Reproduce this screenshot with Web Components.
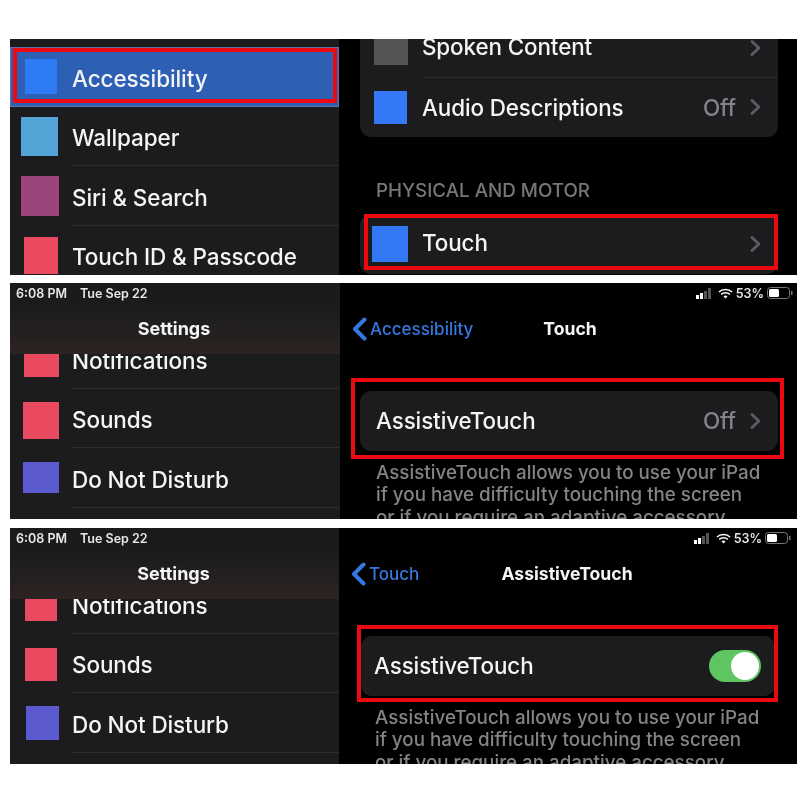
<!DOCTYPE html>
<html>
<head>
<meta charset="utf-8">
<title>AssistiveTouch</title>
<style>
  html, body { margin: 0; background: #fff; }
  body { padding: 39px 10px 0; font-family: Inter, "Liberation Sans", sans-serif; }
  shot-panel + shot-panel { margin-top: 8px; }
  shot-panel:last-of-type { margin-top: 9px; }
</style>
</head>
<body>

<shot-panel side="329">
  <side-list slot="side" pad="8">
    <side-row color="#2d7cf6" x="15" w="32" h="35" selected>Accessibility</side-row>
    <side-row color="#53a5d8" x="11" w="37" h="39">Wallpaper</side-row>
    <side-row color="#9c457c" x="11" w="38" h="40">Siri &amp; Search</side-row>
    <side-row color="#ea4a5f" x="14" w="34" h="37">Touch ID &amp; Passcode</side-row>
  </side-list>
  <div slot="main" style="margin-top:-21px">
    <set-card x="21" w="418">
      <card-row color="#555557" icon-x="14" icon-w="34" icon-h="34" tdy="-2" sep>Spoken Content<ios-chev slot="end"></ios-chev></card-row>
      <card-row color="#3478f6" icon-x="14" icon-w="33" icon-h="33">Audio Descriptions<ios-chev slot="end" off="Off"></ios-chev></card-row>
    </set-card>
    <sect-head>PHYSICAL AND MOTOR</sect-head>
    <set-card x="21" w="418">
      <card-row color="#3478f6" icon-x="12" icon-w="36" icon-h="36" tdy="-3">Touch<ios-chev slot="end"></ios-chev></card-row>
    </set-card>
  </div>
  <red-box l="3" t="9" w="324" h="55"></red-box>
  <red-box l="354" t="175" w="414" h="56"></red-box>
</shot-panel>

<shot-panel side="330">
  <settings-head slot="side"></settings-head>
  <side-list slot="side" pad="-25">
    <side-row color="#ea4a5f" x="14" w="35" h="36">Notifications</side-row>
    <side-row color="#ea4a5f" x="13" w="36" h="37" dy="4">Sounds</side-row>
    <side-row color="#5b5bcf" x="13" w="36" h="31" dy="-1">Do Not Disturb</side-row>
  </side-list>
  <status-bar slot="main"></status-bar>
  <nav-bar slot="main" back="Accessibility" pl="12" pr="9">Touch</nav-bar>
  <set-card slot="main" x="20" w="418" top="37">
    <card-row pad="16">AssistiveTouch<ios-chev slot="end" off="Off"></ios-chev></card-row>
  </set-card>
  <foot-note slot="main" x="36">AssistiveTouch allows you to use your iPad<br>if you have difficulty touching the screen<br>or if you require an adaptive accessory</foot-note>
  <red-box l="341" t="95" w="433" h="81"></red-box>
</shot-panel>

<shot-panel side="329">
  <settings-head slot="side"></settings-head>
  <side-list slot="side" pad="-25">
    <side-row color="#ea4a5f" x="15" w="32" h="34">Notifications</side-row>
    <side-row color="#ea4a5f" x="15" w="32" h="33" dy="2">Sounds</side-row>
    <side-row color="#5b5bcf" x="16" w="33" h="34">Do Not Disturb</side-row>
  </side-list>
  <status-bar slot="main" shift="2"></status-bar>
  <nav-bar slot="main" back="Touch" pl="12" pr="14">AssistiveTouch</nav-bar>
  <set-card slot="main" x="22" w="414" top="37">
    <card-row pad="13" pr="14">AssistiveTouch<ios-toggle slot="end"></ios-toggle></card-row>
  </set-card>
  <foot-note slot="main" x="36">AssistiveTouch allows you to use your iPad<br>if you have difficulty touching the screen<br>or if you require an adaptive accessory</foot-note>
  <red-box l="347" t="97" w="421" h="77"></red-box>
</shot-panel>

<script>
const define = (name, render) => {
  customElements.define(name, class extends HTMLElement {
    connectedCallback() {
      if (this.shadowRoot) return;
      this.attachShadow({ mode: 'open' });
      this.shadowRoot.innerHTML = render(this);
    }
  });
};
const attr = (el, name, fallback) => el.hasAttribute(name) ? el.getAttribute(name) : fallback;

define('shot-panel', el => `
  <style>
    :host { display: grid; grid-template-columns: ${attr(el, 'side', 330)}px 1fr; width: 787px; height: 236px; position: relative; overflow: hidden; background: #000; color: #f5f5f7; filter: blur(0.35px); }
    .side { background: #1c1c1e; overflow: hidden; height: 236px; }
    .main { overflow: hidden; height: 236px; }
  </style>
  <div class="side"><slot name="side"></slot></div>
  <div class="main"><slot name="main"></slot></div>
  <slot></slot>
`);

define('side-list', el => `
  <style>
    :host { display: block; overflow: hidden; }
    .in { margin-top: ${attr(el, 'pad', 0)}px; }
  </style>
  <div class="in"><slot></slot></div>
`);

define('side-row', el => {
  const sel = el.hasAttribute('selected');
  return `
  <style>
    :host { display: flex; align-items: center; height: 59.5px; font-size: 22.5px; font-weight: 500; letter-spacing: -0.1px; ${sel ? 'background:#2d5fb5;box-shadow:inset 0 0 0 1px #5b74ab;' : ''} }
    .slot { flex: none; width: 62px; display: flex; align-items: center; }
    .ico { margin-left: ${attr(el, 'x', 12)}px; margin-top: ${attr(el, 'dy', 0)}px; width: ${attr(el, 'w', 34)}px; height: ${attr(el, 'h', 34)}px; background: ${attr(el, 'color', '#888')}; }
    .txt { flex: 1; height: 100%; box-sizing: border-box; display: flex; align-items: center; padding-top: 4px; ${sel ? '' : 'border-bottom: 1px solid #2d2d2f;'} }
  </style>
  <div class="slot"><div class="ico"></div></div>
  <div class="txt"><slot></slot></div>
`;
});

define('settings-head', () => `
  <style>
    :host { display: block; height: 71px; background: linear-gradient(to bottom, #1b1b1d 35%, #2c2422 100%); }
    .st { height: 20px; display: flex; align-items: center; padding-left: 6px; font-size: 12.5px; font-weight: 600; gap: 13px; color: #e8e8ea; }
    .ti { height: 51px; display: flex; align-items: center; justify-content: center; font-size: 18px; font-weight: 700; padding-right: 2px; }
  </style>
  <div class="st"><span>6:08 PM</span><span>Tue Sep 22</span></div>
  <div class="ti">Settings</div>
`);

define('status-bar', el => `
  <style>
    :host { display: flex; justify-content: flex-end; align-items: center; height: 20px; padding-right: ${4 + Number(attr(el, 'shift', 0))}px; gap: 3px; font-size: 12.5px; font-weight: 600; color: #e8e8ea; }
    svg { display: block; }
    .sig { margin-right: 1px; }
  </style>
  <svg class="sig" width="18" height="11" viewBox="0 0 18 11">
    <rect x="0" y="7" width="3" height="4" fill="#fff"/><rect x="4" y="5" width="3" height="6" fill="#fff"/>
    <rect x="8" y="3" width="3" height="8" fill="#555"/><rect x="12" y="0" width="3" height="11" fill="#555"/>
  </svg>
  <svg width="15" height="11" viewBox="0 0 17 12" fill="none" stroke="#fff" stroke-width="1.7">
    <path d="M1 4.3a11 11 0 0 1 15 0"/><path d="M3.6 7a7.2 7.2 0 0 1 9.8 0"/><path d="M8.5 11.6 6.2 9.3a3.3 3.3 0 0 1 4.6 0z" fill="#fff" stroke="none"/>
  </svg>
  <span>53%</span>
  <svg width="26" height="12" viewBox="0 0 26 12">
    <rect x="0.5" y="0.5" width="22" height="11" rx="3" fill="none" stroke="#777"/>
    <rect x="2" y="2" width="10" height="8" rx="1.5" fill="#fff"/>
    <rect x="24" y="4" width="1.5" height="4" fill="#777"/>
  </svg>
`);

define('nav-bar', el => `
  <style>
    :host { display: grid; grid-template-columns: 1fr auto 1fr; align-items: center; height: 51px; padding: 0 ${attr(el, 'pr', 9)}px 0 ${attr(el, 'pl', 12)}px; }
    .back { display: flex; align-items: center; gap: 3px; color: #3478e0; font-size: 17px; font-weight: 500; }
    .ti { font-size: 17.6px; font-weight: 700; text-align: center; }
  </style>
  <div class="back">
    <svg width="15" height="24" viewBox="0 0 15 24" fill="none" stroke="#3478e0" stroke-width="4" stroke-linecap="round" stroke-linejoin="round"><path d="M12.5 2.5 3 12l9.5 9.5"/></svg>
    <span>${attr(el, 'back', '')}</span>
  </div>
  <div class="ti"><slot></slot></div>
  <div></div>
`);

define('set-card', el => `
  <style>
    :host { display: block; margin-left: ${attr(el, 'x', 20)}px; width: ${attr(el, 'w', 418)}px; margin-top: ${attr(el, 'top', 0)}px; background: #1c1c1e; border-radius: 11px; overflow: hidden; }
  </style>
  <slot></slot>
`);

define('card-row', el => {
  const hasIcon = el.hasAttribute('color');
  return `
  <style>
    :host { display: flex; align-items: center; height: 59.5px; font-size: 22.4px; font-weight: 500; letter-spacing: -0.1px; padding-left: ${attr(el, 'pad', 0)}px; padding-right: ${attr(el, 'pr', 16)}px; position: relative; }
    .slot { flex: none; width: 62px; display: flex; align-items: center; }
    .ico { margin-left: ${attr(el, 'icon-x', 14)}px; width: ${attr(el, 'icon-w', 34)}px; height: ${attr(el, 'icon-h', 34)}px; background: ${attr(el, 'color', '')}; }
    .txt { flex: 1; margin-top: ${attr(el, 'tdy', 0)}px; }
    .end { display: flex; align-items: center; gap: 10px; }
    .sep { position: absolute; left: 62px; right: 0; bottom: 0; height: 1px; background: #2d2d2f; }
  </style>
  ${hasIcon ? '<div class="slot"><div class="ico"></div></div>' : ''}
  <div class="txt"><slot></slot></div>
  <div class="end"><slot name="end"></slot></div>
  ${el.hasAttribute('sep') ? '<div class="sep"></div>' : ''}
`;
});

define('ios-chev', el => `
  <style>
    :host { display: flex; align-items: center; gap: 13px; color: #838388; font-size: 22.5px; font-weight: 500; }
    svg { display: block; }
  </style>
  ${el.hasAttribute('off') ? `<span>${el.getAttribute('off')}</span>` : ''}
  <svg width="13" height="18" viewBox="0 0 13 18" fill="none" stroke="#5c5c60" stroke-width="3" stroke-linecap="round" stroke-linejoin="round"><path d="M3 2.5 9.8 9 3 15.5"/></svg>
`);

define('ios-toggle', () => `
  <style>
    :host { display: flex; align-items: center; justify-content: flex-end; box-sizing: border-box; width: 52px; height: 32px; padding-right: 2px; border-radius: 16px; background: #5ec561; }
    .k { width: 28px; height: 28px; border-radius: 50%; background: #fff; }
  </style>
  <div class="k"></div>
`);

define('sect-head', () => `
  <style>
    :host { display: block; margin: 43px 0 12px 37px; height: 22px; line-height: 22px; font-size: 18.8px; font-weight: 500; color: #77777b; white-space: nowrap; }
  </style>
  <slot></slot>
`);

define('foot-note', el => `
  <style>
    :host { display: block; margin: 11px 0 0 ${attr(el, 'x', 36)}px; font-size: 18.8px; font-weight: 500; line-height: 22.5px; color: #838388; white-space: nowrap; }
  </style>
  <slot></slot>
`);

// red annotation frames lie over the screenshot
define('red-box', el => `
  <style>
    :host { position: absolute; left: ${attr(el, 'l', 0)}px; top: ${attr(el, 't', 0)}px; width: ${attr(el, 'w', 0)}px; height: ${attr(el, 'h', 0)}px; box-sizing: border-box; border: 4px solid #ec0a12; }
  </style>
`);
</script>
</body>
</html>
